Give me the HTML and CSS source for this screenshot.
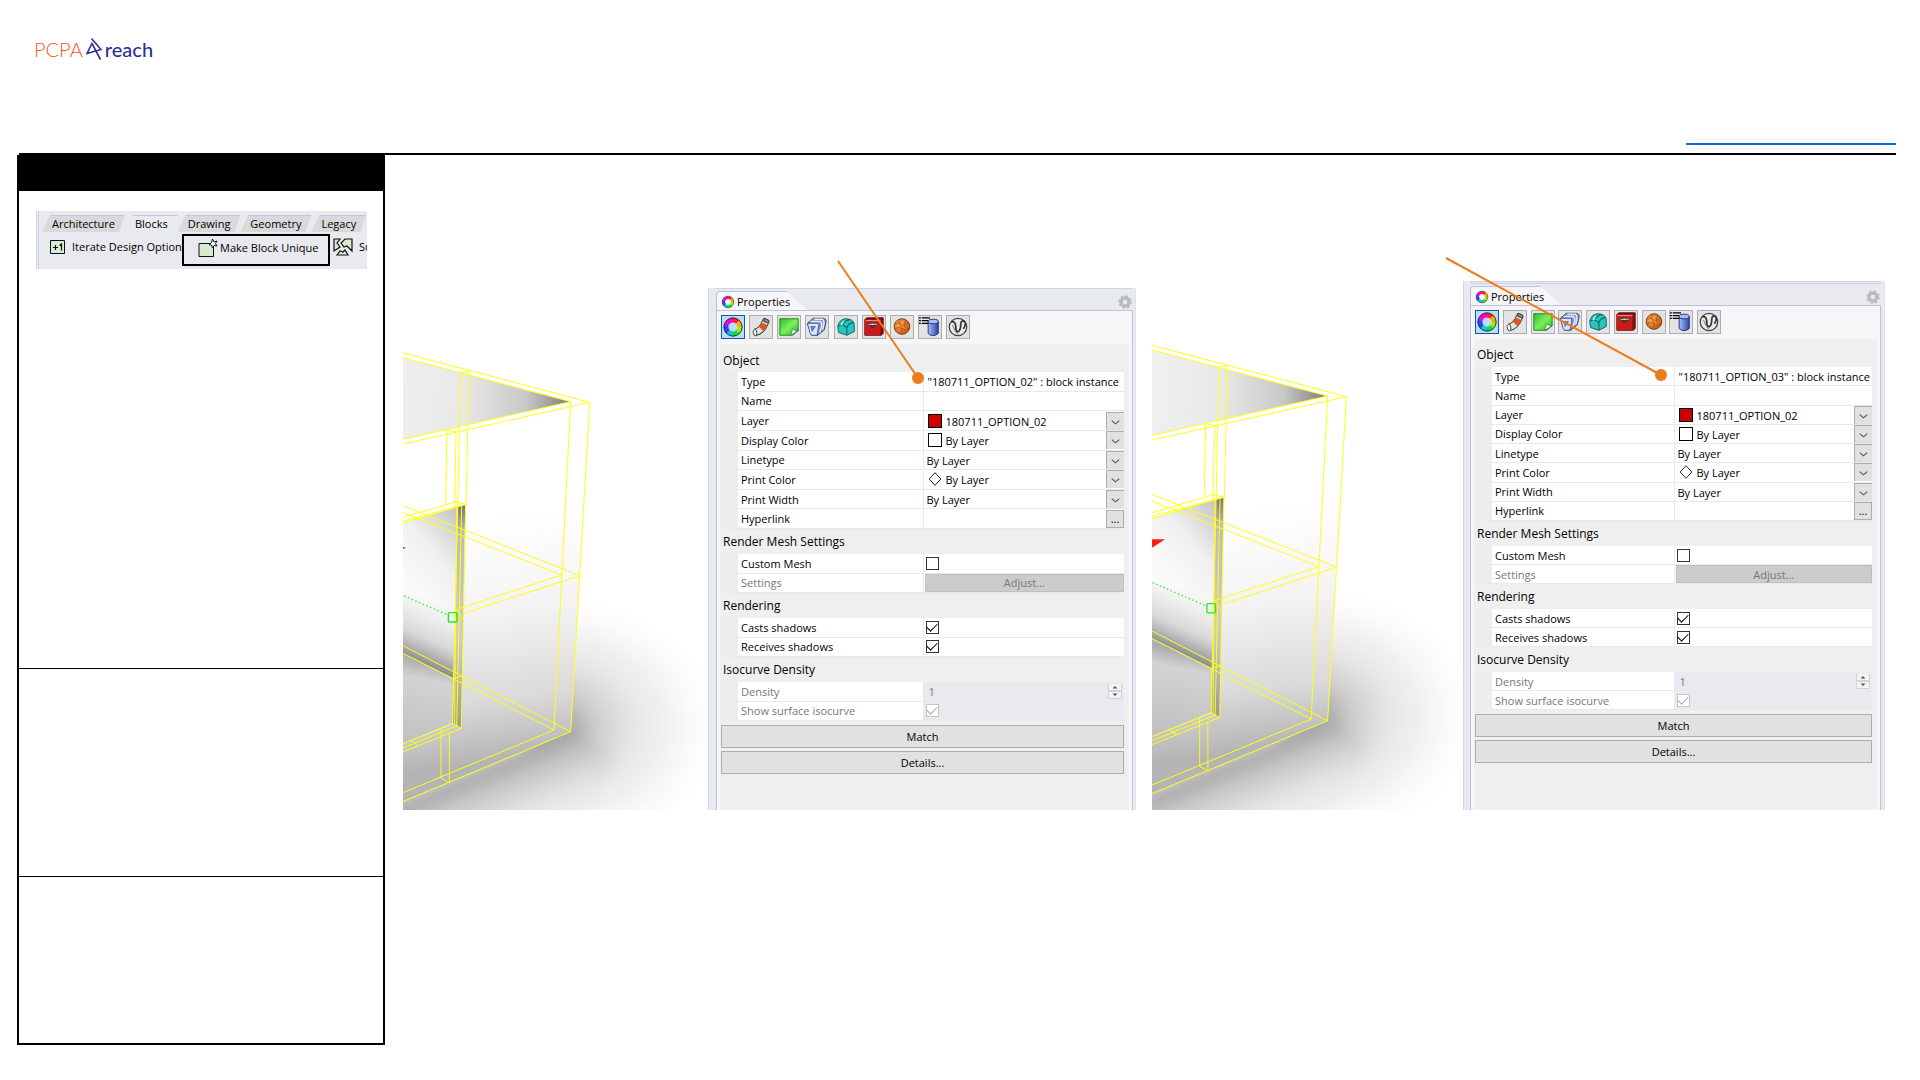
FILE: index.html
```html
<!DOCTYPE html>
<html lang="en">
<head>
<meta charset="utf-8">
<title>PCPA reach – Make Block Unique</title>
<link rel="stylesheet" href="styles.css">
</head>
<body>
<svg class="defs" aria-hidden="true">
  <defs>
    <linearGradient id="g-roof" gradientUnits="userSpaceOnUse" x1="-20" y1="190" x2="512" y2="215"><stop offset="0" stop-color="#f0f0f0"/><stop offset=".4" stop-color="#e8e8e8"/><stop offset=".75" stop-color="#c8c8c8"/><stop offset="1" stop-color="#7c7c7c"/></linearGradient>
    <linearGradient id="g-face" gradientUnits="userSpaceOnUse" x1="240" y1="560" x2="330" y2="1290"><stop offset="0" stop-color="#fff"/><stop offset=".4" stop-color="#f3f3f3"/><stop offset=".75" stop-color="#dadada"/><stop offset="1" stop-color="#b4b4b4"/></linearGradient>
    <linearGradient id="g-wall" gradientUnits="userSpaceOnUse" x1="20" y1="760" x2="210" y2="600"><stop offset="0" stop-color="#fafafa"/><stop offset=".5" stop-color="#f0f0f0"/><stop offset="1" stop-color="#c8c8c8"/></linearGradient>
    <linearGradient id="g-wall-low" gradientUnits="userSpaceOnUse" x1="130" y1="820" x2="50" y2="1000"><stop offset="0" stop-color="#ddd" stop-opacity="0"/><stop offset=".6" stop-color="#cfcfcf" stop-opacity=".8"/><stop offset="1" stop-color="#858585"/></linearGradient>
    <linearGradient id="g-floor" gradientUnits="userSpaceOnUse" x1="90" y1="1000" x2="40" y2="1250"><stop offset="0" stop-color="#b0b0b0"/><stop offset=".2" stop-color="#d3d3d3"/><stop offset="1" stop-color="#c0c0c0"/></linearGradient>
    <linearGradient id="g-jamb" x1="0" y1="0" x2="0" y2="1"><stop offset="0" stop-color="#777"/><stop offset=".12" stop-color="#bbb"/><stop offset=".6" stop-color="#ccc"/><stop offset="1" stop-color="#999"/></linearGradient>
    <linearGradient id="g-ground" gradientUnits="userSpaceOnUse" x1="250" y1="1310" x2="370" y2="1600"><stop offset="0" stop-color="#a0a0a0"/><stop offset=".25" stop-color="#c8c8c8"/><stop offset=".55" stop-color="#e6e6e6"/><stop offset="1" stop-color="#f6f6f6"/></linearGradient>
    <radialGradient id="g-shade" gradientUnits="userSpaceOnUse" cx="430" cy="1190" r="540" gradientTransform="translate(0 297) scale(1 .75)"><stop offset="0" stop-color="#9a9a9a"/><stop offset=".16" stop-color="#b0b0b0"/><stop offset=".3" stop-color="#cfcfcf"/><stop offset=".5" stop-color="#e6e6e6"/><stop offset=".75" stop-color="#f5f5f5"/><stop offset="1" stop-color="#fdfdfd" stop-opacity="0"/></radialGradient>
    <filter id="soft" x="-20%" y="-20%" width="140%" height="140%"><feGaussianBlur stdDeviation="22"/></filter>
    <linearGradient id="g-green" x1="0" y1="0" x2="1" y2="1"><stop offset="0" stop-color="#2bbd2b"/><stop offset=".5" stop-color="#7cf05c"/><stop offset="1" stop-color="#22b322"/></linearGradient>
    <linearGradient id="g-blue" x1="0" y1="0" x2="1" y2="0"><stop offset="0" stop-color="#a9bdff"/><stop offset="1" stop-color="#2f459f"/></linearGradient>
    <radialGradient id="g-orange" cx=".35" cy=".35" r=".7"><stop offset="0" stop-color="#ffb160"/><stop offset="1" stop-color="#c4560b"/></radialGradient>

    <symbol id="i-wheel" viewBox="0 0 24 24">
      <g fill="none" stroke-width="5">
        <path stroke="#f22" d="M12 4.500A7.500 7.500 0 0 1 17.300 6.700"/><path stroke="#f0c" d="M5.500 8.250A7.500 7.500 0 0 1 12 4.500"/>
        <path stroke="#fa0" d="M17.300 6.700A7.500 7.500 0 0 1 19.500 12"/><path stroke="#9e1" d="M19.500 12A7.500 7.500 0 0 1 17.300 17.300"/>
        <path stroke="#1d3" d="M17.300 17.300A7.500 7.500 0 0 1 12 19.500"/><path stroke="#0cd" d="M12 19.500A7.500 7.500 0 0 1 6.700 17.300"/>
        <path stroke="#24f" d="M6.700 17.300A7.500 7.500 0 0 1 4.500 12"/><path stroke="#82f" d="M4.500 12A7.500 7.500 0 0 1 5.500 8.250"/>
      </g>
      <circle cx="12" cy="12" r="10" fill="none" stroke="#222" stroke-width="1"/>
    </symbol>
    <symbol id="i-tube" viewBox="0 0 24 24">
      <path d="M5 18Q13 17 17 6" fill="none" stroke="#333" stroke-width="8"/>
      <path d="M5 18Q13 17 17 6" fill="none" stroke="#e4e4e4" stroke-width="6"/>
      <path d="M12 14Q14.500 11.500 16 8.500" fill="none" stroke="#e0561c" stroke-width="6.500"/>
      <ellipse cx="17.500" cy="5" rx="3.500" ry="1.800" transform="rotate(25 17.500 5)" fill="#888" stroke="#333"/>
      <ellipse cx="5.500" cy="18" rx="2" ry="3.500" transform="rotate(-8 5.500 18)" fill="#fff" stroke="#444"/>
    </symbol>
    <symbol id="i-sheet" viewBox="0 0 24 24">
      <path d="M2 3H22V16L16 21H2Z" fill="url(#g-green)" stroke="#168416"/>
      <path d="M22 16L14 21L16 14Q19 17 22 16Z" fill="#fff" stroke="#555" stroke-width=".7"/>
    </symbol>
    <symbol id="i-box" viewBox="0 0 24 24">
      <path d="M1.500 8L8 2.500H19Q22 3 22 6L20 15L12 21.500L6 21Z" fill="#7f90cc" stroke="#333a66"/>
      <path d="M5 6H15Q18 7 17 11L15 18M9 3.500H18Q20 5 19.500 9L18 15" fill="none" stroke="#e9eeff" stroke-width="1.500"/>
      <path d="M1.500 8H12Q14 8 14 10L12 21H7Q5 21 4.500 19Z" fill="#dbe6ff" stroke="#4a5690"/><path d="M4.500 11H11L6.500 18Z" fill="#5f7ac2"/>
    </symbol>
    <symbol id="i-cube" viewBox="0 0 24 24">
      <path d="M3 12Q4 4 11 3Q20 3 21 9V17L13 21L4 18Z" fill="#2cc3bd" stroke="#0b5c5c"/>
      <path d="M3 11Q9 8 13 13Q14 8 20 7M13 13V21M8 10Q10 5 16 4" fill="none" stroke="#0a6c6c" stroke-width="1.200"/>
      <path d="M6 10Q7 6 11 5Q8 8 8 10Z" fill="#a6fff6"/>
    </symbol>
    <symbol id="i-red" viewBox="0 0 24 24">
      <path d="M2 4L4 2H22V19L20 21H2Z" fill="#8e0d0d" stroke="#4a0808"/>
      <path d="M2 4H19V21H2Z" fill="#c81c1c"/><path d="M3 5H19" stroke="#ff9a9a"/>
      <ellipse cx="10.500" cy="9" rx="5.500" ry="1.300" fill="#ddd" stroke="#222"/><path d="M8 11L10.500 12.500L13 11" stroke="#222" fill="none"/>
    </symbol>
    <symbol id="i-ball" viewBox="0 0 24 24">
      <circle cx="12" cy="11.500" r="8.500" fill="url(#g-orange)" stroke="#7a3608"/>
      <path d="M5 9Q9 6 11 9T18 8M4 14Q8 11 12 14T20 13M10 4Q8 8 11 12T10 19M16 5Q13 9 16 13" fill="none" stroke="#a84a0c" stroke-width=".8"/>
    </symbol>
    <symbol id="i-data" viewBox="0 0 24 24">
      <path d="M10 6V19Q15 24 21 19V6Z" fill="url(#g-blue)" stroke="#1d2d6d"/><ellipse cx="15.500" cy="6" rx="5.500" ry="2.500" fill="#a9bcff" stroke="#1d2d6d"/>
      <path d="M0 2H2M3 2H12M0 5H2M3 5H10M0 8H2M3 8H10" stroke="#000" stroke-width="1.400"/>
    </symbol>
    <symbol id="i-vee" viewBox="0 0 24 24">
      <circle cx="12" cy="12" r="9.500" fill="#ececec" stroke="#444" stroke-width="1.400"/>
      <path d="M4.500 6.500Q9 5 9.500 11Q9.500 18 12.500 17Q15 15 15 9Q15.500 4 19 6Q21.500 8 18 14" fill="none" stroke="#333" stroke-width="1.900"/>
      <path d="M6 10Q8 16 12 20" fill="none" stroke="#666"/>
    </symbol>
    <symbol id="i-gear" viewBox="0 0 14 14"><circle cx="7" cy="7" r="4" fill="none" stroke="#bcbcbc" stroke-width="3.500"/><circle cx="7" cy="7" r="5.800" fill="none" stroke="#bcbcbc" stroke-width="2" stroke-dasharray="2.300 2.250"/></symbol>
    <symbol id="i-chev" viewBox="0 0 18 18"><path d="M5 8L9 11.500L13 8" fill="none" stroke="#555" stroke-width="1.200"/></symbol>
    <symbol id="i-spin" viewBox="0 0 14 16"><path d="M.5 1V7.500H13.500V1M.5 8.500H13.500V15.500H.5Z" fill="#f3f3f3" stroke="#d3d3d3"/><path d="M7 3L9.500 5.500H4.500ZM7 13L9.500 10.500H4.500Z" fill="#555"/></symbol>
    <symbol id="i-diamond" viewBox="0 0 14 14"><path d="M7 .7L12.800 7L7 13.300L1.200 7Z" fill="#fff" stroke="#222"/></symbol>

    <g id="room">
      <path d="M400 1210L545 830Q800 850 1000 980V1500H300Z" fill="url(#g-shade)" filter="url(#soft)"/>
      <path d="M-60 1430L512 1190L640 1280L420 1640H-60Z" fill="url(#g-ground)" filter="url(#soft)"/>
      <path d="M-60 358L569 217L512 1205L-60 1443Z" fill="#fff"/>
      <path d="M-60 520L549 560L512 1205L-60 1443Z" fill="url(#g-face)"/>
      <path d="M-60 65L512 215L-60 343Z" fill="url(#g-roof)"/>
      <path d="M-60 600L175 530L160 1182L-60 1269Z" fill="url(#g-wall)"/>
      <path d="M-60 780L168 820L160 1045L-60 935Z" fill="url(#g-wall-low)"/>
      <path d="M-60 935L160 1045L158 1182L-60 1269Z" fill="url(#g-floor)"/>
      <path d="M173 530L196 526L184 1195L158 1180Z" fill="url(#g-jamb)"/>
      <g fill="none" stroke="#ffff14" stroke-width="3">
        <path d="M-60 50L569 217L512 1205L-60 1443M-60 65L512 215L462 1200L-60 1417"/>
        <path d="M569 217L-60 358M512 215L-60 343"/>
        <path d="M182 127L173 530M207 123L198 528M182 127L207 123M141 299L137 521M168 306L164 532M141 299L168 306"/>
        <path d="M-60 582L165 516L197 523L-60 592M-60 600L182 528"/>
        <path d="M173 530L158 1180M170 530L164 1182M185 528L170 1188M197 523L184 1195"/>
        <path d="M-60 500L540 737L195 849M-60 520L485 735L170 838L190 870"/>
        <path d="M-60 912L512 1205M-60 935L462 1200M160 1045L188 1038"/>
        <path d="M158 1180L-60 1269M172 1187L-60 1282M184 1195L-60 1293M158 1180L184 1195M28 1230L54 1247"/>
        <path d="M123 1195V1344L148 1358V1208" stroke-opacity=".9"/>
      </g>
      <path d="M-60 652H18L-20 677Z" fill="#ff1c1c"/>
      <path d="M-20 784L146 856" stroke="#18f018" stroke-width="4" stroke-dasharray="4 8"/>
      <rect x="145" y="848" width="26" height="28" rx="3" fill="none" stroke="#1cf01c" stroke-width="4"/>
    </g>
  </defs>
</svg>

<header class="page-head">
  <div class="logo">
    <span class="logo-left">PCPA</span>
    <svg class="logo-mark" viewBox="0 0 16 22" aria-hidden="true"><path d="M5.500 .5L15 11.500L1 15.500L6 5.500L14.500 21.500M1 15.500L9.500 13" fill="none" stroke="#2e3192" stroke-width="1.600"/></svg>
    <span class="logo-right">reach</span>
  </div>
  <div class="link-rule"></div>
</header>

<main class="page">
  <aside class="sidebar">
    <div class="sidebar-title"></div>
    <section class="sidebar-part part-tools">
      <div class="ribbon">
        <nav class="ribbon-tabs">
          <button class="rtab">Architecture</button><button class="rtab rtab-on">Blocks</button><button class="rtab">Drawing</button><button class="rtab">Geometry</button><button class="rtab">Legacy</button>
        </nav>
        <div class="ribbon-tools">
          <button class="tool tool-iterate"><svg class="tool-icon" viewBox="0 0 16 16"><path d="M.5 1.500H14.500V14.500H.5Z" fill="#d9ead3" stroke="#111"/><path d="M3 8.500H8M5.500 6V11M9.500 6.500L11.500 5V11.500" fill="none" stroke="#111" stroke-width="1.200"/></svg>Iterate Design Option</button>
          <button class="tool tool-marked"><svg class="tool-icon-wide" viewBox="0 0 20 18"><path d="M1 4.500H15.500V17.500H1Z" fill="#d9ead3" stroke="#111"/><path d="M14.500 0L16 3L19 2L17.500 4.500L19 7L16 6.500L14.500 9L13.500 6L11 5.500L13.500 3.500Z" fill="#fff" stroke="#111"/></svg>Make Block Unique</button>
          <button class="tool tool-cut"><svg class="tool-icon-wide" viewBox="0 0 20 18"><path d="M1 1H7L4 5L7 9L1 13ZM19 1H12L8 5L11 9L14 8L19 13ZM4 17L7 13L10 14L12 12L15 17Z" fill="#d9ead3" stroke="#111" stroke-width="1.200"/></svg>Su</button>
        </div>
      </div>
    </section>
    <section class="sidebar-part part-middle"></section>
    <section class="sidebar-part part-last"></section>
  </aside>

  <div class="figures">
    <figure class="shot">
      <svg class="scene" viewBox="9 -126 915 1566" preserveAspectRatio="xMinYMax slice" role="img" aria-label="Wireframe of option 02"><use href="#room"/></svg>
      <section class="panel panel-a">
        <div class="panel-top">
          <h2 class="panel-tab"><svg class="tab-icon"><use href="#i-wheel"/></svg>Properties</h2>
          <svg class="gear"><use href="#i-gear"/></svg>
        </div>
        <div class="panel-inner">
          <div class="panel-icons">
            <button class="pi pi-on" aria-label="Object"><svg><use href="#i-wheel"/></svg></button><button class="pi" aria-label="Material"><svg><use href="#i-tube"/></svg></button><button class="pi" aria-label="Mapping"><svg><use href="#i-sheet"/></svg></button><button class="pi" aria-label="Box"><svg><use href="#i-box"/></svg></button><button class="pi" aria-label="Edge softening"><svg><use href="#i-cube"/></svg></button><button class="pi" aria-label="Shut lining"><svg><use href="#i-red"/></svg></button><button class="pi" aria-label="Displacement"><svg><use href="#i-ball"/></svg></button><button class="pi" aria-label="User text"><svg><use href="#i-data"/></svg></button><button class="pi" aria-label="V-Ray"><svg><use href="#i-vee"/></svg></button>
          </div>
          <div class="panel-body">
            <h3>Object</h3>
            <table class="props props-long">
              <tr><th scope="row">Type</th><td><div class="cell"><span class="val">"180711_OPTION_02" : block instance</span></div></td></tr>
              <tr><th scope="row"><label for="a-name">Name</label></th><td><div class="cell"><input class="field" id="a-name" type="text"></div></td></tr>
              <tr><th scope="row"><label for="a-layer">Layer</label></th><td><div class="cell"><span class="swatch swatch-red"></span><select id="a-layer"><option>180711_OPTION_02</option></select><svg class="drop"><use href="#i-chev"/></svg></div></td></tr>
              <tr><th scope="row"><label for="a-dc">Display Color</label></th><td><div class="cell"><span class="swatch"></span><select id="a-dc"><option>By Layer</option></select><svg class="drop"><use href="#i-chev"/></svg></div></td></tr>
              <tr><th scope="row"><label for="a-lt">Linetype</label></th><td><div class="cell"><select id="a-lt"><option>By Layer</option></select><svg class="drop"><use href="#i-chev"/></svg></div></td></tr>
              <tr><th scope="row"><label for="a-pc">Print Color</label></th><td><div class="cell"><svg class="diamond"><use href="#i-diamond"/></svg><select id="a-pc"><option>By Layer</option></select><svg class="drop"><use href="#i-chev"/></svg></div></td></tr>
              <tr><th scope="row"><label for="a-pw">Print Width</label></th><td><div class="cell"><select id="a-pw"><option>By Layer</option></select><svg class="drop"><use href="#i-chev"/></svg></div></td></tr>
              <tr><th scope="row"><label for="a-hl">Hyperlink</label></th><td><div class="cell"><input class="field" id="a-hl" type="text"><button class="more">...</button></div></td></tr>
            </table>
            <h3>Render Mesh Settings</h3>
            <table class="props">
              <tr><th scope="row"><label for="a-cm">Custom Mesh</label></th><td><div class="cell"><input id="a-cm" type="checkbox"></div></td></tr>
              <tr class="off"><th scope="row">Settings</th><td><button class="adjust" disabled>Adjust...</button></td></tr>
            </table>
            <h3>Rendering</h3>
            <table class="props">
              <tr><th scope="row"><label for="a-cs">Casts shadows</label></th><td><div class="cell"><input id="a-cs" type="checkbox" checked></div></td></tr>
              <tr><th scope="row"><label for="a-rs">Receives shadows</label></th><td><div class="cell"><input id="a-rs" type="checkbox" checked></div></td></tr>
            </table>
            <h3>Isocurve Density</h3>
            <table class="props">
              <tr class="off dim"><th scope="row"><label for="a-de">Density</label></th><td><div class="cell"><input class="field" id="a-de" type="text" value="1" disabled><svg class="spin"><use href="#i-spin"/></svg></div></td></tr>
              <tr class="off dim"><th scope="row"><label for="a-si">Show surface isocurve</label></th><td><div class="cell"><input id="a-si" type="checkbox" checked disabled></div></td></tr>
            </table>
            <div class="actions"><button class="wide">Match</button><button class="wide">Details...</button></div>
          </div>
        </div>
        <svg class="leader" aria-hidden="true"><path d="M130 -27L210 90"/><circle cx="210" cy="90" r="6"/></svg>
      </section>
    </figure>

    <figure class="shot">
      <svg class="scene" viewBox="36 -147 933 1587" preserveAspectRatio="xMinYMax slice" role="img" aria-label="Wireframe of option 03"><use href="#room" transform="translate(57.500 -13.500) scale(.987 .984)"/></svg>
      <section class="panel panel-b">
        <div class="panel-top">
          <h2 class="panel-tab"><svg class="tab-icon"><use href="#i-wheel"/></svg>Properties</h2>
          <svg class="gear"><use href="#i-gear"/></svg>
        </div>
        <div class="panel-inner">
          <div class="panel-icons">
            <button class="pi pi-on" aria-label="Object"><svg><use href="#i-wheel"/></svg></button><button class="pi" aria-label="Material"><svg><use href="#i-tube"/></svg></button><button class="pi" aria-label="Mapping"><svg><use href="#i-sheet"/></svg></button><button class="pi" aria-label="Box"><svg><use href="#i-box"/></svg></button><button class="pi" aria-label="Edge softening"><svg><use href="#i-cube"/></svg></button><button class="pi" aria-label="Shut lining"><svg><use href="#i-red"/></svg></button><button class="pi" aria-label="Displacement"><svg><use href="#i-ball"/></svg></button><button class="pi" aria-label="User text"><svg><use href="#i-data"/></svg></button><button class="pi" aria-label="V-Ray"><svg><use href="#i-vee"/></svg></button>
          </div>
          <div class="panel-body">
            <h3>Object</h3>
            <table class="props props-long">
              <tr><th scope="row">Type</th><td><div class="cell"><span class="val">"180711_OPTION_03" : block instance</span></div></td></tr>
              <tr><th scope="row"><label for="b-name">Name</label></th><td><div class="cell"><input class="field" id="b-name" type="text"></div></td></tr>
              <tr><th scope="row"><label for="b-layer">Layer</label></th><td><div class="cell"><span class="swatch swatch-red"></span><select id="b-layer"><option>180711_OPTION_02</option></select><svg class="drop"><use href="#i-chev"/></svg></div></td></tr>
              <tr><th scope="row"><label for="b-dc">Display Color</label></th><td><div class="cell"><span class="swatch"></span><select id="b-dc"><option>By Layer</option></select><svg class="drop"><use href="#i-chev"/></svg></div></td></tr>
              <tr><th scope="row"><label for="b-lt">Linetype</label></th><td><div class="cell"><select id="b-lt"><option>By Layer</option></select><svg class="drop"><use href="#i-chev"/></svg></div></td></tr>
              <tr><th scope="row"><label for="b-pc">Print Color</label></th><td><div class="cell"><svg class="diamond"><use href="#i-diamond"/></svg><select id="b-pc"><option>By Layer</option></select><svg class="drop"><use href="#i-chev"/></svg></div></td></tr>
              <tr><th scope="row"><label for="b-pw">Print Width</label></th><td><div class="cell"><select id="b-pw"><option>By Layer</option></select><svg class="drop"><use href="#i-chev"/></svg></div></td></tr>
              <tr><th scope="row"><label for="b-hl">Hyperlink</label></th><td><div class="cell"><input class="field" id="b-hl" type="text"><button class="more">...</button></div></td></tr>
            </table>
            <h3>Render Mesh Settings</h3>
            <table class="props">
              <tr><th scope="row"><label for="b-cm">Custom Mesh</label></th><td><div class="cell"><input id="b-cm" type="checkbox"></div></td></tr>
              <tr class="off"><th scope="row">Settings</th><td><button class="adjust" disabled>Adjust...</button></td></tr>
            </table>
            <h3>Rendering</h3>
            <table class="props">
              <tr><th scope="row"><label for="b-cs">Casts shadows</label></th><td><div class="cell"><input id="b-cs" type="checkbox" checked></div></td></tr>
              <tr><th scope="row"><label for="b-rs">Receives shadows</label></th><td><div class="cell"><input id="b-rs" type="checkbox" checked></div></td></tr>
            </table>
            <h3>Isocurve Density</h3>
            <table class="props">
              <tr class="off dim"><th scope="row"><label for="b-de">Density</label></th><td><div class="cell"><input class="field" id="b-de" type="text" value="1" disabled><svg class="spin"><use href="#i-spin"/></svg></div></td></tr>
              <tr class="off dim"><th scope="row"><label for="b-si">Show surface isocurve</label></th><td><div class="cell"><input id="b-si" type="checkbox" checked disabled></div></td></tr>
            </table>
            <div class="actions"><button class="wide">Match</button><button class="wide">Details...</button></div>
          </div>
        </div>
        <svg class="leader" aria-hidden="true"><path d="M-17 -23L198 94"/><circle cx="198" cy="94" r="6"/></svg>
      </section>
    </figure>
  </div>
</main>
</body>
</html>
```
FILE: styles.css
```css
* { box-sizing: border-box; }

body {
  margin: 0;
  background: #fff;
  color: #000;
  font: 11px/16px "Open Sans", "Noto Sans", sans-serif;
}

button, input, select { font: inherit; color: inherit; margin: 0; padding: 0; border: 0; border-radius: 0; background: none; }
svg { display: block; flex: none; }
h2, h3, figure { margin: 0; font-weight: 400; }
.defs { position: absolute; width: 0; height: 0; }

/* Page header */
.page-head {
  display: flex;
  justify-content: space-between;
  align-items: flex-end;
  min-height: 155px;
  margin: 0 24px 0 19px;
  border-bottom: 2px solid #000;
}
.logo {
  display: flex;
  align-items: center;
  gap: 3px;
  align-self: flex-start;
  padding: 37px 0 0 15px;
  font: 20px/24px Lato, sans-serif;
}
.logo-left { color: #f15a29; font-weight: 300; }
.logo-right { color: #2e3192; font-weight: 500; }
.logo-mark { width: 16px; height: 22px; }
.link-rule { width: 210px; height: 2px; margin-bottom: 8px; background: #1268c8; }

/* Main layout */
.page { display: flex; align-items: flex-start; padding: 0 35px 35px 17px; gap: 18px; }

.sidebar { flex: 0 0 368px; min-width: 0; border: 2px solid #000; border-top: 0; }
.sidebar-title { height: 36px; background: #000; }
.sidebar-part + .sidebar-part { border-top: 1px solid #000; }
.part-tools { min-height: 477px; padding: 20px 16px 0 17px; }
.part-middle { min-height: 208px; }
.part-last { min-height: 167px; }

/* Ribbon */
.ribbon { height: 58px; padding: 4px 0 0 6px; overflow: hidden; background: #e9eaef; border-left: 3px double #cdd3e6; }
.ribbon { padding-left: 3px; }
.ribbon-tabs { display: flex; height: 17px; }
.rtab {
  flex: none;
  padding: 0 10px;
  background: #d9d9d9;
  border-top: 1px solid #c3c8dc;
  clip-path: polygon(8px 0, 100% 0, calc(100% - 6px) 100%, 0 100%);
}
.rtab-on { background: #e9eaef; }
.ribbon-tools { display: flex; align-items: flex-start; padding-top: 2px; }
.tool { display: flex; align-items: center; flex: none; height: 32px; padding-bottom: 6px; gap: 6px; white-space: nowrap; }
.tool-icon { width: 16px; height: 16px; }
.tool-icon-wide { width: 20px; height: 18px; }
.tool-iterate { width: 140px; padding-left: 8px; }
.tool-marked { width: 148px; border: 2px solid #000; padding-left: 14px; gap: 2px; padding-bottom: 4px; }
.tool-cut { padding-left: 3px; gap: 6px; }

/* Screenshots with the properties panel */
.figures { display: flex; align-items: flex-end; flex: 1; gap: 16px; padding-top: 126px; min-width: 0; }
.shot { display: flex; align-items: stretch; flex: 1; min-width: 0; }
.scene { flex: 1; width: 0; min-width: 0; height: auto; }

.panel { position: relative; flex: none; display: flex; flex-direction: column; background: #e9eaef; border-left: 1px solid #cfd6e8; border-right: 1px solid #e2e4ea; }
.panel-a { width: 428px; height: 522px; padding: 0 2px 0 7px; --top: 22px; --two: 39px; --long: 157px; --gap: 4px; --first: 24px; --icons: 249px; }
.panel-b { width: 422px; height: 529px; padding: 0 3px 0 6px; --top: 24px; --two: 38px; --long: 154px; --gap: 3px; --first: 25px; --icons: 246px; }
.panel-top { display: flex; justify-content: space-between; align-items: flex-end; height: var(--top); border-top: 1px solid #c9d2e6; }
.panel-b .panel-top { border-top: 3px double #c9d2e6; }
.panel-tab {
  display: flex; align-items: center; gap: 2px;
  height: 19px; width: 92px; padding: 2px 0 0 4px;
  font-size: 11px; line-height: 16px;
  background: #f6f6f9;
  border-top: 1px solid #b9c3dc; border-left: 1px solid #b9c3dc;
  border-top-left-radius: 4px;
  clip-path: polygon(0 0, 70px 0, 100% 100%, 0 100%);
}
.tab-icon { width: 14px; height: 14px; }
.gear { width: 14px; height: 14px; margin: 0 1px 1px 0; }
.panel-inner { flex: 1; padding: 4px 3px 0; background: #f6f6f9; border: 1px solid #b9c3dc; border-bottom: 0; }
.panel-icons { display: flex; justify-content: space-between; width: var(--icons); margin-left: 1px; }
.pi { width: 24px; height: 24px; background: #e3e3e3; border: 1px solid #adadad; }
.pi svg { width: 22px; height: 22px; }
.pi-on { background: #bcdcf4; border-color: #0a5aa8; }

.panel-body { height: calc(100% - 29px); margin-top: 5px; padding: var(--gap) 5px 0 1px; background: #efefef; }
h3 { height: 25px; padding-left: 2px; font-size: 12px; line-height: 26px; }
h3:first-child { height: var(--first); }
.props { width: 100%; height: var(--two); border-collapse: separate; border-spacing: 0; table-layout: fixed; }
.props-long { height: var(--long); }
.props th { height: 19px; padding: 1px 0 0 3px; text-align: left; font-weight: 400; background: #fff; border-left: 17px solid #ededed; border-bottom: 1px solid #e8e9ec; }
.props th { line-height: 16px; }
.props td { height: 19px; padding: 0; background: #fff; border-left: 1px solid #e8e9ec; border-bottom: 1px solid #e8e9ec; }
.off { color: #777; }
.props .off td { color: #777; }
.props .dim td { background: #e9eaef; }
.val { padding: 1px 0 0 2px; white-space: nowrap; }
.cell { display: flex; align-items: center; height: 18px; padding-left: 2px; }
.field { flex: 1; width: 0; height: 18px; padding: 1px 0 0 3px; }
select { flex: 1; width: 0; height: 18px; appearance: none; line-height: 17px; padding: 1px 0 0 1px; }
.swatch, .diamond { width: 14px; height: 14px; margin: 0 3px 0 2px; }
.swatch { border: 1px solid #000; background: #fff; }
.swatch-red { background: #c00; }
.drop { width: 18px; height: 18px; background: #e1e1e1; border: 1px solid #adadad; border-width: 1px 0 0 1px; }
.more { width: 18px; height: 18px; line-height: 12px; background: #e1e1e1; border: 1px solid #adadad; }
.spin { width: 14px; height: 16px; margin-right: 2px; }
input[type="checkbox"] { appearance: none; display: grid; place-items: center; width: 13px; height: 13px; background: #fff; border: 1px solid #333; }
input[type="checkbox"]:checked::after { content: ""; width: 9px; height: 5px; margin-top: -3px; border-left: 1px solid currentColor; border-bottom: 1px solid currentColor; transform: rotate(-45deg); }
input[type="checkbox"]:disabled { border-color: #c4c4c4; color: #aaa; }
.adjust { display: block; width: calc(100% - 1px); height: 18px; margin-left: 1px; line-height: 15px; background: #ccc; border: 1px solid #bfbfbf; color: #777; }
.actions { display: grid; gap: 3px; padding-top: 4px; }
.wide { height: 23px; line-height: 20px; background: #e1e1e1; border: 1px solid #adadad; }

/* Callout lines drawn over the panels */
.leader { position: absolute; top: 0; left: -1px; width: 10px; height: 10px; overflow: visible; pointer-events: none; }
.leader path { fill: none; stroke: #ec7c1c; stroke-width: 2; }
.leader circle { fill: #ec7c1c; }
```
